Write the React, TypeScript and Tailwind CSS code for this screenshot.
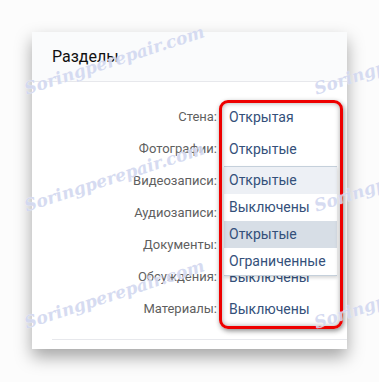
const rows = [
  { label: 'Стена', value: 'Открытая' },
  { label: 'Фотографии', value: 'Открытые' },
  { label: 'Видеозаписи', value: 'Открытые' },
  { label: 'Аудиозаписи', value: 'Выключены' },
  { label: 'Документы', value: 'Открытые' },
  { label: 'Обсуждения', value: 'Выключены' },
  { label: 'Материалы', value: 'Выключены' },
];

const options = [
  { text: 'Открытые', bg: 'bg-[#edf0f5]' },
  { text: 'Выключены', bg: 'bg-white' },
  { text: 'Открытые', bg: 'bg-[#d7dee6]' },
  { text: 'Ограниченные', bg: 'bg-white' },
];

// watermark spots (page coords)
const marks = [
  { x: 25, y: 75 },
  { x: 25, y: 192 },
  { x: 25, y: 309 },
  { x: 315, y: 75 },
  { x: 315, y: 192 },
  { x: 315, y: 309 },
];

export default function App() {
  return (
    <main className="relative h-[382px] w-[379px] overflow-hidden bg-[#fcfcfc] pt-8 pl-8 font-['Roboto','Noto_Sans',sans-serif]">
      <section className="relative w-[315px] bg-white shadow-[0_8px_16px_rgba(0,0,0,0.35)]">
        <header className="flex h-[50px] items-center border-b border-[#e7e8ec] bg-[#fafbfc] px-5">
          <h2 className="text-base text-[#111]">Разделы</h2>
        </header>

        <div className="pt-[19px] pb-[14px]">
          {rows.map((row) => (
            <div key={row.label} className="flex h-8 items-center">
              <span className="w-[185px] text-right text-[13px] text-[#5f5f5f]">{row.label}:</span>
              <span className="pl-3 text-[14px] text-[#34507a]">{row.value}</span>
            </div>
          ))}
        </div>
        <div className="ml-5 h-[10px] border-t border-[#e7e8ec]" />

        {/* open dropdown lists */}
        <div className="absolute top-[134px] left-[192px] w-[113px] border-t border-b border-[#c5d0db] shadow-[0_2px_3px_rgba(0,0,0,0.15)]">
          {options.map((opt, i) => (
            <div key={i} className={`flex h-[27px] items-center pl-[5px] text-[14px] text-[#34507a] ${opt.bg}`}>
              {opt.text}
            </div>
          ))}
        </div>

        {/* red highlight frame */}
        <div className="absolute top-[68px] left-[187px] h-[229px] w-[124px] rounded-[9px] border-[3px] border-[#ee0000] shadow-[1px_2px_5px_rgba(0,0,0,0.45),inset_0_0_5px_rgba(0,0,0,0.35)]" />
      </section>

      {marks.map((m, i) => (
        <span
          key={i}
          className="pointer-events-none absolute origin-left -rotate-[18deg] font-['DejaVu_Serif',serif] text-[17px] font-semibold italic whitespace-nowrap text-[#d2d8f0] opacity-90 [text-shadow:0_0_1px_#fff]"
          style={{ left: m.x, top: m.y + 2 }}
        >
          Soringperepair.com
        </span>
      ))}
    </main>
  );
}
